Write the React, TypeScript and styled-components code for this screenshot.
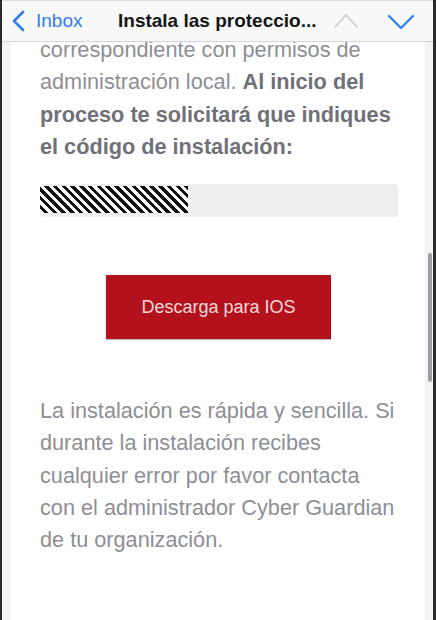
import React from 'react'
import styled, { createGlobalStyle } from 'styled-components'

/**
 * Global
 */

const GlobalStyle = createGlobalStyle`
	html, body {
		margin: 0;
		padding: 0;
		background: #2a2a2a;
	}
	body {
		font-family: 'Liberation Sans', Arial, sans-serif;
		-webkit-font-smoothing: antialiased;
	}
`

/**
 * Styled Components
 */

const Frame = styled.div`
	position: relative;
	width: 436px;
	height: 620px;
	box-sizing: border-box;
	border-left: 2px solid #2b2b2b;
	border-right: 3px solid #2b2b2b;
	background: #f3f3f5;
	display: flex;
	flex-direction: column;
	overflow: hidden;
`

const NavBar = styled.header`
	position: relative;
	z-index: 2;
	height: 40px;
	flex: none;
	display: flex;
	align-items: center;
	background: #f8f8f9;
	border-top: 1px solid #dcdcdc;
	border-bottom: 1px solid #d4d4d8;
	padding: 0 0 0 10px;
`

const BackLink = styled.a`
	display: flex;
	align-items: center;
	gap: 10px;
	color: #2f7df6;
	font-size: 19px;
	text-decoration: none;
	width: 106px;
`

const Title = styled.h1`
	margin: 0;
	font-size: 19px;
	font-weight: 700;
	color: #151515;
	white-space: nowrap;
	width: 210px;
`

const Arrows = styled.div`
	display: flex;
	align-items: center;
	gap: 30px;
	margin-left: 6px;
`

const Viewport = styled.main`
	flex: 1;
	display: flex;
	padding: 0 8px 0 9px;
	overflow: hidden;
`

const Card = styled.article`
	flex: 1;
	background: #ffffff;
	padding: 0 27px 0 29px;
	color: #8e8e95;
	font-size: 21.7px;
	line-height: 32.3px;
`

const Paragraph = styled.p<{ $top: number }>`
	margin: ${(p) => p.$top}px 0 0;
	white-space: nowrap;

	strong {
		color: #707078;
		font-weight: 700;
	}
`

const CodeBox = styled.div`
	margin-top: 21px;
	height: 33px;
	box-sizing: border-box;
	padding: 2px 0 4px;
	background: #efeef1;
	border-radius: 4px;
	width: 358px;
`

const Hatch = styled.div`
	width: 148px;
	height: 100%;
	background: repeating-linear-gradient(
		45deg,
		#ffffff 0,
		#ffffff 3px,
		#111111 3px,
		#111111 6.2px
	);
`

const ButtonRow = styled.div`
	display: flex;
	justify-content: center;
	margin-top: 58px;
	padding-right: 1px;
`

const DownloadButton = styled.a`
	width: 225px;
	height: 64px;
	display: flex;
	align-items: center;
	justify-content: center;
	background: #b3121d;
	color: #f7d9dc;
	font-size: 18px;
	text-decoration: none;
	box-shadow: 0 1px 1px rgba(0, 0, 0, 0.25);
`

const ScrollThumb = styled.div`
	position: absolute;
	right: 1px;
	top: 253px;
	width: 4px;
	height: 129px;
	border-radius: 2px;
	background: #9e9ea2;
`

/**
 * Icons
 */

const Chevron = ({
	points,
	color,
	width,
	stroke,
}: {
	points: string
	color: string
	width: number
	stroke: number
}) => (
	<svg width={width} height="24" viewBox={`0 0 ${width} 24`}>
		<polyline
			points={points}
			fill="none"
			stroke={color}
			strokeWidth={stroke}
			strokeLinecap="round"
			strokeLinejoin="round"
		/>
	</svg>
)

export default function App() {
	return (
		<>
			<GlobalStyle />
			<Frame>
				<NavBar>
					<BackLink href="#">
						<Chevron points="11,3 2,12 11,21" color="#2f7df6" width={14} stroke={2.6} />
						Inbox
					</BackLink>
					<Title>Instala las proteccio...</Title>
					<Arrows>
						<Chevron points="1,18 12,6 23,18" color="#c9c9ce" width={24} stroke={1.6} />
						<Chevron points="1,7 13,19 25,7" color="#2f7df6" width={26} stroke={2.2} />
					</Arrows>
				</NavBar>
				<Viewport>
					<Card>
						<Paragraph $top={-8}>
							correspondiente con permisos de
							<br />
							administración local. <strong>Al inicio del</strong>
							<br />
							<strong>proceso te solicitará que indiques</strong>
							<br />
							<strong>el código de instalación:</strong>
						</Paragraph>
						<CodeBox>
							<Hatch />
						</CodeBox>
						<ButtonRow>
							<DownloadButton href="#">Descarga para IOS</DownloadButton>
						</ButtonRow>
						<Paragraph $top={56}>
							La instalación es rápida y sencilla. Si
							<br />
							durante la instalación recibes
							<br />
							cualquier error por favor contacta
							<br />
							con el administrador Cyber Guardian
							<br />
							de tu organización.
						</Paragraph>
					</Card>
				</Viewport>
				<ScrollThumb />
			</Frame>
		</>
	)
}
